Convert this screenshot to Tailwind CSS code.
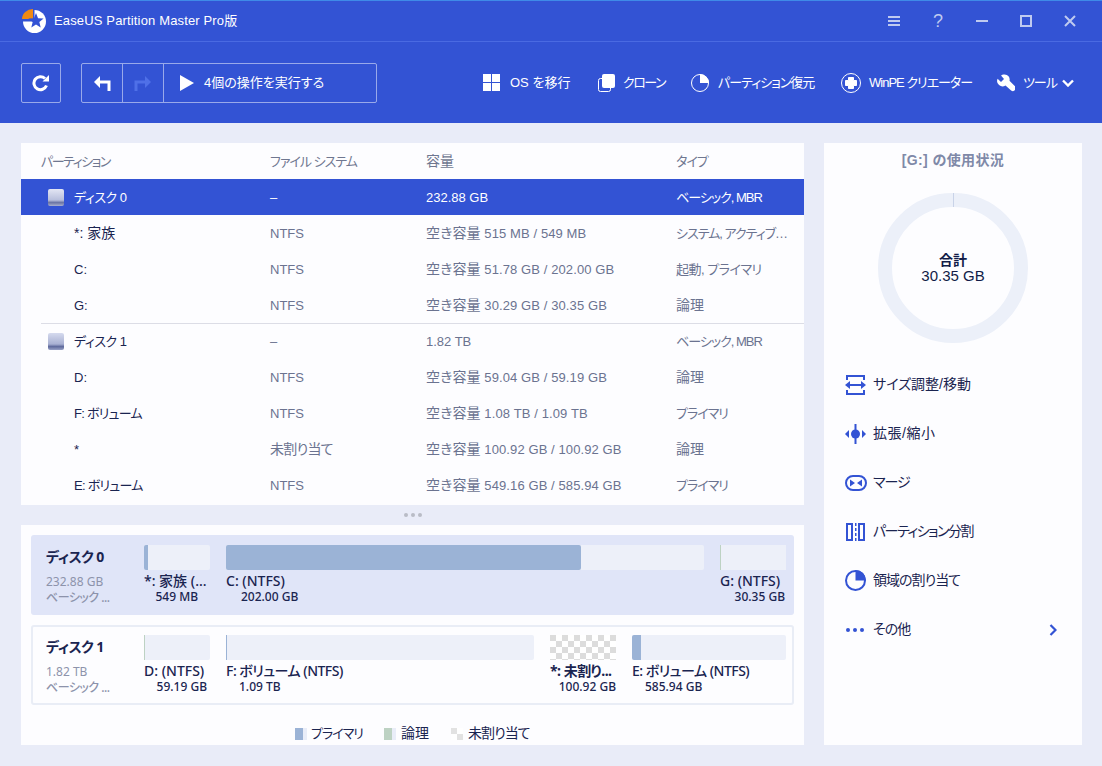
<!DOCTYPE html>
<html lang="ja">
<head>
  <meta charset="UTF-8" />
  <title>EaseUS Partition Master Pro版</title>
  <script src="https://cdn.jsdelivr.net/npm/@tailwindcss/browser@4"></script>
</head>
<body class="w-[1102px] h-[766px] overflow-hidden bg-[#e9ecf8] text-[13px] text-[#1a2450] [font-feature-settings:'palt'] [font-family:'Liberation_Sans','Noto_Sans_CJK_JP',sans-serif]">

  <!-- Title bar + toolbar -->
  <header class="h-[123px] bg-[#3353d4] text-white border-t border-[#3f8ae8]">
    <div class="h-[41px] flex items-center pl-[22px] border-b border-[#4a6ae2]">
      <svg class="w-[24px] h-[24px]" viewBox="0 0 24 24">
        <circle cx="12.5" cy="12.5" r="11.5" fill="#fff"/>
        <path d="M12.5 12.5H0A12.5 12.5 0 0 1 12.5 0z" fill="#3353d4"/>
        <path d="M11 10H0A11 10 0 0 1 11 0z" fill="#f08a12"/>
        <path d="M14 4l2.06 5.17 5.54.36-4.27 3.55 1.37 5.39L14 15.5l-4.7 2.97 1.37-5.39-4.27-3.55 5.54-.36z" fill="#3353d4"/>
      </svg>
      <span class="ml-[8px] tracking-[0.15px]">EaseUS Partition Master Pro版</span>
      <div class="ml-auto flex items-center text-[#bfcaf0]">
        <svg class="w-[12px] h-[12px] mr-[33px]" viewBox="0 0 12 12" fill="currentColor"><rect y="1" width="12" height="2"/><rect y="5" width="12" height="2"/><rect y="9" width="12" height="2"/></svg>
        <span class="text-[18px] leading-none mr-[33px]">?</span>
        <svg class="w-[12px] h-[12px] mr-[32px]" viewBox="0 0 12 12" fill="currentColor"><rect y="5" width="12" height="2"/></svg>
        <svg class="w-[12px] h-[12px] mr-[32px]" viewBox="0 0 12 12" fill="none" stroke="currentColor" stroke-width="2"><rect x="1" y="1" width="10" height="10"/></svg>
        <svg class="w-[12px] h-[12px] mr-[26px]" viewBox="0 0 12 12" fill="none" stroke="currentColor" stroke-width="2"><path d="M1 1l10 10M11 1L1 11"/></svg>
      </div>
    </div>
    <div class="h-[81px] flex items-center pl-[21px] whitespace-nowrap">
      <button class="w-[40px] h-[40px] mt-[1px] shrink-0 flex items-center justify-center border border-white/50 rounded-[2px]">
        <svg class="w-[18px] h-[18px]" viewBox="0 0 18 18" fill="none" stroke="#fff" stroke-width="3"><path d="M14.5 11.5A6.5 6.5 0 1 1 13 4.5"/><path d="M10.5 7.5h6.5v-6.5z" fill="#fff" stroke="none"/></svg>
      </button>
      <div class="ml-[20px] w-[296px] h-[40px] mt-[1px] shrink-0 flex border border-white/50 rounded-[2px]">
        <div class="w-[41px] flex items-center justify-center border-r border-white/50">
          <svg class="w-[18px] h-[16px]" viewBox="0 0 18 16" fill="none" stroke="#fff" stroke-width="3"><path d="M16 16V7H5"/><path d="M7 1L1 7l6 6z" fill="#fff" stroke="none"/></svg>
        </div>
        <div class="w-[41px] flex items-center justify-center border-r border-white/50">
          <svg class="w-[18px] h-[16px]" viewBox="0 0 18 16" fill="none" stroke="#4f70e8" stroke-width="3"><path d="M2 16V7h11"/><path d="M11 1l6 6-6 6z" fill="#4f70e8" stroke="none"/></svg>
        </div>
        <div class="flex items-center pl-[16px]">
          <svg class="w-[14px] h-[16px]" viewBox="0 0 14 16" fill="#fff"><path d="M0 0l14 8-14 8z"/></svg>
          <span class="ml-[10px]">4個の操作を実行する</span>
        </div>
      </div>
      <nav class="ml-[106px] flex items-center">
        <div class="flex items-center">
          <svg class="w-[17px] h-[17px]" viewBox="0 0 17 17" fill="#fff"><rect width="8" height="8"/><rect x="9" width="8" height="8"/><rect y="9" width="8" height="8"/><rect x="9" y="9" width="8" height="8"/></svg>
          <span class="ml-[10px] w-[61px]">OS を移行</span>
        </div>
        <div class="flex items-center ml-[27px]">
          <svg class="w-[17px] h-[18px]" viewBox="0 0 17 18"><rect x="0.5" y="4.5" width="12" height="13" rx="2" fill="none" stroke="#fff"/><rect x="4" y="0" width="13" height="14" rx="2" fill="#fff"/></svg>
          <span class="ml-[8px] w-[42px] tracking-[-1.5px]">クローン</span>
        </div>
        <div class="flex items-center ml-[26px]">
          <svg class="w-[18px] h-[18px]" viewBox="0 0 18 18"><circle cx="9" cy="9" r="8.5" fill="none" stroke="#fff"/><path d="M9 0a9 9 0 0 1 9 9H9z" fill="#fff"/></svg>
          <span class="ml-[9px] w-[98px] tracking-[-1px]">パーティション復元</span>
        </div>
        <div class="flex items-center ml-[25px]">
          <svg class="w-[20px] h-[20px]" viewBox="0 0 20 20"><circle cx="10" cy="10" r="9.5" fill="none" stroke="#fff"/><path d="M7.5 4.5h5v3h3v5h-3v3h-5v-3h-3v-5h3z" fill="#fff" stroke="#fff" stroke-linejoin="round"/></svg>
          <span class="ml-[8px] w-[103px] tracking-[-1px]">WinPE クリエーター</span>
        </div>
        <div class="flex items-center ml-[25px]">
          <svg class="w-[18px] h-[18px]" viewBox="0 0 18 18" fill="#fff"><path d="M7.5 0.5a5 5 0 0 1 5 6.2l5 5a2.4 2.4 0 0 1-3.4 4.8l-5.6-5a5.4 5.4 0 0 1-7.9-6.7l3.4 3.2 3-3-3-3.4c.8-.7 1.6-1.1 3.5-1.1z"/></svg>
          <span class="ml-[8px] w-[34px] tracking-[-1px]">ツール</span>
          <svg class="w-[12px] h-[8px] ml-[5px]" viewBox="0 0 12 8" fill="none" stroke="#fff" stroke-width="2.4"><path d="M1 1.5l5 5 5-5"/></svg>
        </div>
      </nav>
    </div>
  </header>

  <div class="flex pt-[20px] pl-[21px] gap-[20px]">
    <div class="w-[783px]">

      <!-- Partition table -->
      <section class="h-[362px] bg-[#fdfdff] whitespace-nowrap">
        <div class="h-[36px] pt-[1px] grid grid-cols-[229px_156px_250px_1fr] items-center pl-[20px] text-[#6f7790] tracking-[-1px]">
          <span class="tracking-[-1.5px]">パーティション</span><span>ファイル システム</span><span class="text-[14px] tracking-normal">容量</span><span>タイプ</span>
        </div>
        <div class="h-[36px] pt-[1px] grid grid-cols-[229px_156px_250px_1fr] items-center pl-[20px] bg-[#3353d4] text-white">
          <span class="flex items-center pl-[7px]">
            <span class="w-[16px] h-[17px] rounded-[2px] bg-[linear-gradient(#e3e6f4,#b8bfdc_65%,#6a74a4_80%,#a9b0cf)]"></span>
            <span class="ml-[10px] tracking-[-0.5px]">ディスク 0</span>
          </span>
          <span>–</span><span>232.88 GB</span><span class="tracking-[-1px]">ベーシック, MBR</span>
        </div>
        <div class="h-[36px] pt-[1px] grid grid-cols-[229px_156px_250px_1fr] items-center pl-[20px] text-[#6b7390]">
          <span class="pl-[33px] text-[#1a2450] text-[14px]">*: 家族</span><span>NTFS</span><span class="tracking-[0.1px]"><span class="text-[14px]">空き容量</span> 515 MB / 549 MB</span><span class="tracking-[-1px]">システム, アクティブ…</span>
        </div>
        <div class="h-[36px] pt-[1px] grid grid-cols-[229px_156px_250px_1fr] items-center pl-[20px] text-[#6b7390]">
          <span class="pl-[33px] text-[#1a2450]">C:</span><span>NTFS</span><span class="tracking-[0.1px]"><span class="text-[14px]">空き容量</span> 51.78 GB / 202.00 GB</span><span class="tracking-[-0.5px]">起動, プライマリ</span>
        </div>
        <div class="h-[36px] pt-[1px] grid grid-cols-[229px_156px_250px_1fr] items-center pl-[20px] text-[#6b7390]">
          <span class="pl-[33px] text-[#1a2450]">G:</span><span>NTFS</span><span class="tracking-[0.1px]"><span class="text-[14px]">空き容量</span> 30.29 GB / 30.35 GB</span><span class="text-[14px]">論理</span>
        </div>
        <div class="ml-[20px] border-t border-[#dcdde6]"></div>
        <div class="h-[36px] pt-[1px] -mt-px grid grid-cols-[229px_156px_250px_1fr] items-center pl-[20px] text-[#6b7390]">
          <span class="flex items-center pl-[7px] text-[#1a2450]">
            <span class="w-[16px] h-[17px] rounded-[2px] bg-[linear-gradient(#d5daee,#a9b1d3_65%,#5f6a9c_80%,#98a1c6)]"></span>
            <span class="ml-[10px] tracking-[-0.5px]">ディスク 1</span>
          </span>
          <span>–</span><span>1.82 TB</span><span class="tracking-[-1px]">ベーシック, MBR</span>
        </div>
        <div class="h-[36px] pt-[1px] grid grid-cols-[229px_156px_250px_1fr] items-center pl-[20px] text-[#6b7390]">
          <span class="pl-[33px] text-[#1a2450]">D:</span><span>NTFS</span><span class="tracking-[0.1px]"><span class="text-[14px]">空き容量</span> 59.04 GB / 59.19 GB</span><span class="text-[14px]">論理</span>
        </div>
        <div class="h-[36px] pt-[1px] grid grid-cols-[229px_156px_250px_1fr] items-center pl-[20px] text-[#6b7390]">
          <span class="pl-[33px] text-[#1a2450] tracking-[-0.75px]">F: ボリューム</span><span>NTFS</span><span class="tracking-[0.1px]"><span class="text-[14px]">空き容量</span> 1.08 TB / 1.09 TB</span><span class="tracking-[-1px]">プライマリ</span>
        </div>
        <div class="h-[36px] pt-[1px] grid grid-cols-[229px_156px_250px_1fr] items-center pl-[20px] text-[#6b7390]">
          <span class="pl-[33px] text-[#1a2450]">*</span><span class="text-[14px] tracking-[-0.75px]">未割り当て</span><span class="tracking-[0.1px]"><span class="text-[14px]">空き容量</span> 100.92 GB / 100.92 GB</span><span class="text-[14px]">論理</span>
        </div>
        <div class="h-[36px] pt-[1px] grid grid-cols-[229px_156px_250px_1fr] items-center pl-[20px] text-[#6b7390]">
          <span class="pl-[33px] text-[#1a2450] tracking-[-0.75px]">E: ボリューム</span><span>NTFS</span><span class="tracking-[0.1px]"><span class="text-[14px]">空き容量</span> 549.16 GB / 585.94 GB</span><span class="tracking-[-1px]">プライマリ</span>
        </div>
      </section>

      <!-- Splitter dots -->
      <div class="h-[20px] flex items-center justify-center gap-[3px]">
        <span class="w-[4px] h-[4px] rounded-full bg-[#b9bcc6]"></span>
        <span class="w-[4px] h-[4px] rounded-full bg-[#b9bcc6]"></span>
        <span class="w-[4px] h-[4px] rounded-full bg-[#b9bcc6]"></span>
      </div>

      <!-- Disk map -->
      <section class="h-[220px] bg-[#fdfdff] px-[10px] pt-[10px] whitespace-nowrap text-[12px] [font-family:'Noto_Sans','Noto_Sans_CJK_JP',sans-serif]">
        <div class="h-[80px] flex rounded-[3px] bg-[#e0e5f8] pl-[15px] pr-[8px] pt-[10px]">
          <div class="w-[98px] shrink-0">
            <div class="text-[14px] font-bold leading-[24px] tracking-[-0.5px]">ディスク 0</div>
            <div class="mt-[5px] leading-[16px] text-[#8d93ab]">232.88 GB</div>
            <div class="leading-[16px] text-[#8d93ab] font-medium tracking-[-0.5px]">ベーシック ...</div>
          </div>
          <div class="flex gap-[16px] flex-1">
            <div class="w-[66px]">
              <div class="h-[25px] rounded-[2px] bg-[#edf0f9]"><div class="h-full w-[4px] rounded-l-[2px] bg-[#9bb3d6]"></div></div>
              <div class="mt-[2px] leading-[17px] text-[14px] font-medium">*: 家族 (...</div>
              <div class="leading-[16px] text-right pr-[12px] font-medium">549 MB</div>
            </div>
            <div class="w-[478px]">
              <div class="h-[25px] rounded-[2px] bg-[#edf0f9]"><div class="h-full w-[355px] rounded-[2px] bg-[#9bb3d6]"></div></div>
              <div class="mt-[2px] leading-[17px] text-[14px] font-medium">C: (NTFS)</div>
              <div class="leading-[16px] pl-[15px] font-medium">202.00 GB</div>
            </div>
            <div class="w-[66px]">
              <div class="h-[25px] bg-[#edf0f9]"><div class="h-full w-px bg-[#bdd2c3]"></div></div>
              <div class="mt-[2px] leading-[17px] text-[14px] font-medium">G: (NTFS)</div>
              <div class="leading-[16px] text-right pr-px font-medium">30.35 GB</div>
            </div>
          </div>
        </div>
        <div class="mt-[10px] h-[80px] flex rounded-[3px] border-2 border-[#e9edf6] pl-[13px] pr-[6px] pt-[8px]">
          <div class="w-[98px] shrink-0">
            <div class="text-[14px] font-bold leading-[24px] tracking-[-0.5px]">ディスク 1</div>
            <div class="mt-[5px] leading-[16px] text-[#8d93ab]">1.82 TB</div>
            <div class="leading-[16px] text-[#8d93ab] font-medium tracking-[-0.5px]">ベーシック ...</div>
          </div>
          <div class="flex gap-[16px] flex-1">
            <div class="w-[66px]">
              <div class="h-[25px] rounded-[2px] bg-[#edf0f9]"><div class="h-full w-px bg-[#bdd2c3]"></div></div>
              <div class="mt-[2px] leading-[17px] text-[14px] font-medium">D: (NTFS)</div>
              <div class="leading-[16px] text-right pr-[3px] font-medium">59.19 GB</div>
            </div>
            <div class="w-[308px]">
              <div class="h-[25px] rounded-[2px] bg-[#edf0f9]"><div class="h-full w-px bg-[#9bb3d6]"></div></div>
              <div class="mt-[2px] leading-[17px] text-[14px] font-medium tracking-[-0.5px]">F: ボリューム (NTFS)</div>
              <div class="leading-[16px] pl-[13px] font-medium">1.09 TB</div>
            </div>
            <div class="w-[66px]">
              <div class="h-[25px] bg-[repeating-conic-gradient(#dcdcdc_0_25%,#fff_0_50%)] bg-size-[12px_12px] [background-position:6px_0]"></div>
              <div class="mt-[2px] leading-[17px] text-[14px] font-bold tracking-[-0.5px]">*: 未割り...</div>
              <div class="leading-[16px] text-right font-medium">100.92 GB</div>
            </div>
            <div class="w-[154px]">
              <div class="h-[25px] rounded-[2px] bg-[#edf0f9]"><div class="h-full w-[9px] rounded-l-[2px] bg-[#9bb3d6]"></div></div>
              <div class="mt-[2px] leading-[17px] text-[14px] font-medium tracking-[-0.5px]">E: ボリューム (NTFS)</div>
              <div class="leading-[16px] pl-[13px] font-medium">585.94 GB</div>
            </div>
          </div>
        </div>
        <div class="mt-[18px] flex items-center pl-[264px] text-[14px] [font-family:'Liberation_Sans','Noto_Sans_CJK_JP',sans-serif]">
          <span class="w-[12px] h-[12px] bg-[linear-gradient(90deg,#9bb3d6_8px,#e9edf8_8px)]"></span>
          <span class="ml-[4px] w-[73px] text-[13px] tracking-[-1px]">プライマリ</span>
          <span class="w-[12px] h-[12px] bg-[linear-gradient(90deg,#bdd2c3_8px,#e9edf8_8px)]"></span>
          <span class="ml-[5px] w-[50px]">論理</span>
          <span class="w-[12px] h-[12px] bg-[repeating-conic-gradient(#e2e2e2_0_25%,#fff_0_50%)] bg-size-[12px_12px] [background-position:6px_0]"></span>
          <span class="ml-[5px] tracking-[-1px]">未割り当て</span>
        </div>
      </section>
    </div>

    <!-- Usage + actions -->
    <aside class="w-[258px] h-[602px] bg-[#fdfdff]">
      <div class="h-[34px] flex items-center justify-center text-[14px] font-bold tracking-[0.4px] text-[#7f89a8]">[G:] の使用状況</div>
      <div class="mt-[16px] mx-auto w-[150px] h-[150px] rounded-full border-[14px] border-[#ecf0f9] relative flex flex-col items-center justify-center text-[#111c48]">
        <span class="absolute -top-[14px] left-[60.5px] w-px h-[14px] bg-[#c9d3e8]"></span>
        <span class="font-bold text-[14px] leading-[15px]">合計</span>
        <span class="text-[15px] leading-[15px]">30.35 GB</span>
      </div>
      <ul class="mt-[17px] pl-[21px] pr-[25px] text-[14px]">
        <li class="h-[49px] flex items-center">
          <svg class="w-[21px] h-[20px] shrink-0" viewBox="0 0 21 20" fill="#3353d4"><path d="M1 0h19v5h-2V2H3v3H1zM1 15h2v3h15v-3h2v5H1z"/><path d="M0 10l5-4v3h11V6l5 4-5 4v-3H5v3z"/></svg>
          <span class="ml-[7px]">サイズ調整/移動</span>
        </li>
        <li class="h-[49px] flex items-center">
          <svg class="w-[21px] h-[20px] shrink-0" viewBox="0 0 21 20" fill="#3353d4"><rect x="9.5" y="0" width="2" height="20"/><circle cx="10.5" cy="10" r="4.5"/><path d="M0 10l4-4v8zM21 10l-4-4v8z"/></svg>
          <span class="ml-[7px] tracking-[0.5px]">拡張/縮小</span>
        </li>
        <li class="h-[49px] flex items-center">
          <svg class="w-[22px] h-[16px] shrink-0" viewBox="0 0 22 16"><rect x="1" y="1" width="20" height="14" rx="7" fill="none" stroke="#3353d4" stroke-width="2"/><path d="M5 4.5l5 3.5-5 3.5zM17 4.5l-5 3.5 5 3.5z" fill="#3353d4"/></svg>
          <span class="ml-[6px] tracking-[-1px]">マージ</span>
        </li>
        <li class="h-[49px] flex items-center">
          <svg class="w-[19px] h-[18px] shrink-0 ml-px mr-px" viewBox="0 0 19 18" fill="#3353d4"><path d="M0 0h7v18H0zM2 2v14h3V2z" fill-rule="evenodd"/><rect x="9" y="0" width="1.5" height="3"/><rect x="9" y="5" width="1.5" height="3"/><rect x="9" y="10" width="1.5" height="3"/><rect x="9" y="15" width="1.5" height="3"/><path d="M12 0h7v18h-7zM14 2v14h3V2z" fill-rule="evenodd"/></svg>
          <span class="ml-[7px] tracking-[-1.5px]">パーティション分割</span>
        </li>
        <li class="h-[49px] flex items-center">
          <svg class="w-[21px] h-[21px] shrink-0" viewBox="0 0 21 21"><circle cx="10.5" cy="10.5" r="9.5" fill="none" stroke="#3353d4" stroke-width="2"/><path d="M10.5 0a10.5 10.5 0 0 1 10.5 10.5H10.5z" fill="#3353d4"/></svg>
          <span class="ml-[7px] tracking-[-1px]">領域の割り当て</span>
        </li>
        <li class="h-[49px] flex items-center">
          <svg class="w-[21px] h-[6px] shrink-0" viewBox="0 0 21 6" fill="#3353d4"><circle cx="3" cy="3" r="2"/><circle cx="10" cy="3" r="2"/><circle cx="17" cy="3" r="2"/></svg>
          <span class="ml-[7px] tracking-[-1px]">その他</span>
          <svg class="w-[8px] h-[12px] ml-auto" viewBox="0 0 8 12" fill="none" stroke="#3353d4" stroke-width="2.2"><path d="M1.5 1l5 5-5 5"/></svg>
        </li>
      </ul>
    </aside>
  </div>
</body>
</html>
